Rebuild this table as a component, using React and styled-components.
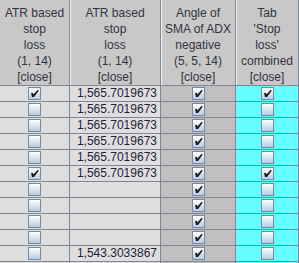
import React from "react";
import styled, { createGlobalStyle } from "styled-components";

const Global = createGlobalStyle`
  html, body { margin: 0; padding: 0; background: #dcdcdc; }
  body { font-family: "Liberation Sans", Arial, sans-serif; font-size: 12px; }
`;

const Table = styled.div`
  width: 299px;
  height: 263px;
  overflow: hidden;
  display: grid;
  grid-template-columns: 70px 91px 75px 63px;
  grid-auto-rows: 16px;
  grid-template-rows: 86px;
`;

const HeadCell = styled.div`
  background: #c8c8c8;
  color: #333340;
  text-align: center;
  line-height: 16px;
  padding-top: 5px;
  box-sizing: border-box;
  border-right: 1px solid #7d8894;
  border-bottom: 1px solid #7d8894;
  box-shadow: ${(p) => (p.$first ? "none" : "inset 1px 0 0 #eef0f2")};
  white-space: nowrap;
  overflow: hidden;
`;

const bg = { light: "#dedede", dark: "#c0c0c0", cyan: "#66ffff" };

const Cell = styled.div`
  background: ${(p) => bg[p.$tone]};
  box-sizing: border-box;
  border-right: 1px solid #7d8894;
  border-bottom: 1px solid #7d8894;
  display: flex;
  align-items: center;
  justify-content: ${(p) => (p.$num ? "flex-end" : "center")};
  padding-right: ${(p) => (p.$num ? "3px" : "0")};
  color: #1e1e3c;
  line-height: 15px;
  white-space: nowrap;
`;

const Box = styled.span`
  width: 13px;
  height: 13px;
  box-sizing: border-box;
  border: 1px solid #7a8a9a;
  background: linear-gradient(to bottom, #ffffff 0%, #dbe6f1 50%, #b7cde2 100%);
  display: flex;
  align-items: center;
  justify-content: center;
`;

const Check = ({ on }) => (
  <Box>
    {on && (
      <svg width="11" height="11" viewBox="0 0 11 11">
        <path d="M2 5 L4 5 L4.5 6.5 L8.5 2 L9.5 2 L9.5 3 L5 9 L3 9 Z" fill="#1a1a1a" />
      </svg>
    )}
  </Box>
);

const headers = [
  ["ATR based", "stop", "loss", "(1, 14)", "[close]"],
  ["ATR based", "stop", "loss", "(1, 14)", "[close]"],
  ["Angle of", "SMA of ADX", "negative", "(5, 5, 14)", "[close]"],
  ["Tab", "'Stop", "loss'", "combined", "[close]"],
];

const A = "1,565.7019673";
const rows = [
  [true, A, true, true],
  [false, A, true, false],
  [false, A, true, false],
  [false, A, true, false],
  [false, A, true, false],
  [true, A, true, true],
  [false, "", true, false],
  [false, "", true, false],
  [false, "", true, false],
  [false, "", true, false],
  [false, "1,543.3033867", true, false],
  [false, "", true, false],
];

export default function App() {
  return (
    <>
      <Global />
      <Table>
        {headers.map((lines, i) => (
          <HeadCell key={i} $first={i === 0}>
            {lines.map((l, j) => (
              <div key={j}>{l}</div>
            ))}
          </HeadCell>
        ))}
        {rows.map((r, i) => (
          <React.Fragment key={i}>
            <Cell $tone="light"><Check on={r[0]} /></Cell>
            <Cell $tone="light" $num>{r[1]}</Cell>
            <Cell $tone="dark"><Check on={r[2]} /></Cell>
            <Cell $tone="cyan"><Check on={r[3]} /></Cell>
          </React.Fragment>
        ))}
      </Table>
    </>
  );
}
